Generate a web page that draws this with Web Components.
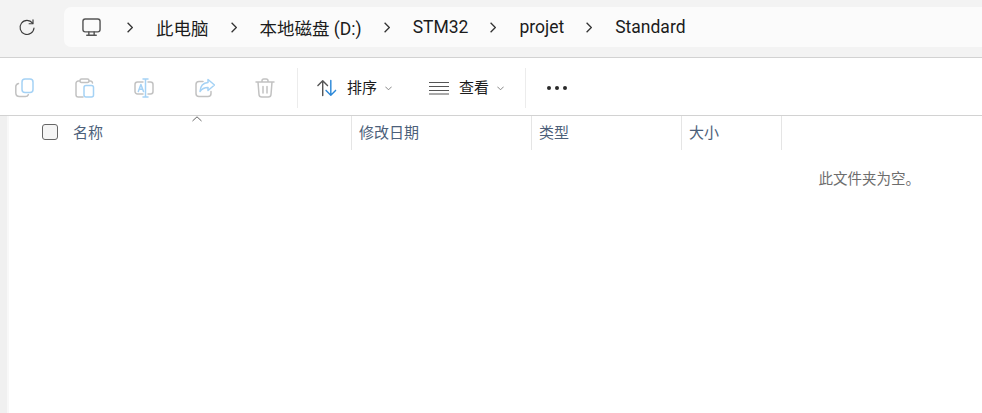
<!DOCTYPE html>
<html lang="zh">
<head>
<meta charset="utf-8">
<title>Standard</title>
<style>
    html, body { margin: 0; height: 100%; background: #fff; overflow: hidden; }
    body { font-family: "Noto Sans", "Noto Sans CJK SC", sans-serif; }
</style>
</head>
<body>
<file-window>
    <address-bar slot="top">
        <path-crumb>此电脑</path-crumb>
        <path-crumb>本地磁盘 (D:)</path-crumb>
        <path-crumb>STM32</path-crumb>
        <path-crumb>projet</path-crumb>
        <path-crumb>Standard</path-crumb>
    </address-bar>
    <command-bar slot="bar"></command-bar>
    <file-list slot="list">此文件夹为空。</file-list>
</file-window>

<script>
const CJK = '"Noto Sans CJK SC", sans-serif';
const LATIN = 'Roboto, "Noto Sans CJK SC", sans-serif';

class FileWindow extends HTMLElement {
    constructor() {
        super();
        this.attachShadow({ mode: 'open' });
        this.shadowRoot.innerHTML = `
            <style>
                :host { display: flex; flex-direction: column; width: 982px; height: 413px; overflow: hidden; }
                .top { height: 57px; flex: none; background: #f3f3f3; border-bottom: 1px solid #d2d2d2; }
                .bar { height: 57px; flex: none; background: #fff; border-bottom: 1px solid #d2d2d2; }
                .body { flex: 1; display: flex; min-height: 0; }
                .rail { width: 7px; flex: none; background: #f0f0f0; border-right: 2px solid #f8f8f8; }
                .list { flex: 1; min-width: 0; }
            </style>
            <div class="top"><slot name="top"></slot></div>
            <div class="bar"><slot name="bar"></slot></div>
            <div class="body">
                <div class="rail"></div>
                <div class="list"><slot name="list"></slot></div>
            </div>
        `;
    }
}

class AddressBar extends HTMLElement {
    constructor() {
        super();
        this.attachShadow({ mode: 'open' });
        this.shadowRoot.innerHTML = `
            <style>
                :host { display: flex; align-items: flex-start; height: 57px; padding: 7px 0 0 18px; box-sizing: border-box; }
                .refresh { width: 18px; height: 40px; flex: none; display: flex; align-items: center; margin-right: 28px; }
                .field {
                    flex: 1; height: 40px; display: flex; align-items: center; padding-left: 18px;
                    background: #fbfbfb; border-radius: 7px 0 0 7px; min-width: 0;
                }
                .pc { width: 19px; height: 19px; flex: none; margin-right: 4px; }
                svg { display: block; fill: none; }
            </style>
            <div class="refresh">
                <svg width="18" height="18" viewBox="0 0 18 18" stroke="#3a3a3a" stroke-width="1.15" stroke-linecap="round" stroke-linejoin="round">
                    <path d="M14.6 5.2A7 7 0 1 0 16 10" />
                    <path d="M15 1.8v3.9h-3.9" />
                </svg>
            </div>
            <div class="field">
                <svg class="pc" viewBox="0 0 20 20" stroke="#555" stroke-width="1.5" stroke-linecap="round" stroke-linejoin="round">
                    <rect x="1" y="1" width="18" height="13.6" rx="2.4" />
                    <path d="M7.2 14.8v3M12.8 14.8v3M5 18.2h10" />
                </svg>
                <slot></slot>
            </div>
        `;
    }
}

class PathCrumb extends HTMLElement {
    constructor() {
        super();
        this.attachShadow({ mode: 'open' });
        this.shadowRoot.innerHTML = `
            <style>
                :host { display: flex; align-items: center; font: 17.5px ${LATIN}; color: #1c1c1c; white-space: nowrap; }
                svg { width: 6px; height: 11px; margin: 0 23px 0 22px; flex: none; fill: none; stroke: #333; stroke-width: 1.3; }
            </style>
            <svg viewBox="0 0 6 11"><path d="M.6.8l4.7 4.7L.6 10.2" /></svg>
            <slot></slot>
        `;
    }
}

class CommandBar extends HTMLElement {
    constructor() {
        super();
        this.attachShadow({ mode: 'open' });
        const g = 'stroke="#c2c2c2"';
        const b = 'stroke="#a5d2f5"';
        this.shadowRoot.innerHTML = `
            <style>
                :host { display: flex; align-items: center; height: 57px; padding: 3px 0 0 15px; box-sizing: border-box; font: 15px ${CJK}; color: #1c1c1c; }
                svg { display: block; fill: none; flex: none; stroke-width: 1.5; stroke-linecap: round; stroke-linejoin: round; }
                .ico { width: 20px; height: 20px; margin-right: 40px; }
                .sep { width: 1px; height: 40px; background: #ececec; flex: none; }
                .cmd { display: flex; align-items: center; flex: none; }
                .label { margin-left: 10px; line-height: 20px; position: relative; top: -1px; }
                .chev { width: 7px; height: 5px; margin-left: 8px; stroke: #777; stroke-width: 1; }
                .more { display: flex; gap: 4px; margin-left: 21px; }
                .more i { width: 4px; height: 4px; border-radius: 50%; background: #2a2a2a; }
            </style>
            <svg class="ico" viewBox="0 0 20 20">
                <path ${g} d="M3.5 5.5C1.8 6 .8 7 .8 8.6v6.2c0 2.2 1.5 3.8 3.8 3.800h5.8c1.4 0 2.5-.8 3-2" />
                <rect ${b} x="7" y="1" width="11" height="13.6" rx="3" />
            </svg>
            <svg class="ico" viewBox="0 0 20 20">
                <path ${g} d="M5 3H3.3A2.3 2.3 0 0 0 1 5.3v11.4A2.3 2.3 0 0 0 3.3 19H8" />
                <path ${g} d="M14 3h1.2A2.3 2.3 0 0 1 17.5 5" />
                <rect ${g} x="5" y="1" width="9" height="3.6" rx="1.5" />
                <rect ${b} x="9" y="7.5" width="9.5" height="11.5" rx="2" />
            </svg>
            <svg class="ico" viewBox="0 0 20 20" style="margin:0 41px 0 -1px">
                <path ${g} d="M9 4H3.5A2.5 2.5 0 0 0 1 6.5v7A2.5 2.5 0 0 0 3.5 16H9" />
                <path ${g} d="M14 4h2.5A2.5 2.5 0 0 1 19 6.5v7a2.5 2.5 0 0 1-2.5 2.5H14" />
                <path ${b} d="M11.5 1v18M9 1h5M9 19h5M4.3 13.5l2.6-7 2.600 7M5.2 11.2h3.4" />
            </svg>
            <svg class="ico" viewBox="0 0 20 20">
                <path ${g} d="M8 3.5H4A3 3 0 0 0 1 6.500v9a3 3 0 0 0 3 3h9a3 3 0 0 0 3-3v-2" />
                <path ${b} d="M13 1.5 19.500 7 13 12.500V9.500C9.500 9.500 7 10.500 5 13.500 5.300 8.500 8 4.800 13 4.500Z" />
            </svg>
            <svg class="ico" viewBox="0 0 20 20" style="margin-right:22px">
                <path ${g} d="M1 4h18M7 4V2.800A1.800 1.800 0 0 1 8.800 1h2.400A1.800 1.800 0 0 1 13 2.800V4M3 4l1 12.500A2.700 2.700 0 0 0 6.700 19h6.600a2.700 2.700 0 0 0 2.700-2.500L17 4M8 8.500v6.500M12 8.500v6.500" />
            </svg>
            <div class="sep"></div>
            <div class="cmd" style="margin-left:19px">
                <svg width="20" height="18" viewBox="0 0 21 18">
                    <path stroke="#555" d="M6 17V1.500M1 6.500l5-5 5 5" />
                    <path stroke="#2b88d8" d="M14.500 1v15.500M9.500 11.500l5 5 5-5" />
                </svg>
                <span class="label">排序</span>
                <svg class="chev" viewBox="0 0 8 5"><path d="M.7.7 4 4 7.300.7" /></svg>
            </div>
            <div class="cmd" style="margin-left:37px">
                <svg width="20" height="14" viewBox="0 0 20 14">
                    <path stroke="#555" stroke-width="1.2" stroke-linecap="butt" d="M0 1.500h20M0 5.500h20M0 9.500h20M0 13h20" />
                </svg>
                <span class="label">查看</span>
                <svg class="chev" viewBox="0 0 8 5"><path d="M.7.7 4 4 7.300.7" /></svg>
            </div>
            <div class="sep" style="margin-left:21px"></div>
            <div class="more"><i></i><i></i><i></i></div>
        `;
    }
}

class ColumnHead extends HTMLElement {
    constructor() {
        super();
        this.attachShadow({ mode: 'open' });
        this.shadowRoot.innerHTML = `
            <style>
                :host { display: flex; align-items: center; box-sizing: border-box; height: 34px; padding: 0 0 3px 7px; border-right: 1px solid #e5e5e5; font: 15px ${CJK}; color: #4c607a; }
            </style>
            <slot></slot>
        `;
    }
}

class FileList extends HTMLElement {
    constructor() {
        super();
        this.attachShadow({ mode: 'open' });
        this.shadowRoot.innerHTML = `
            <style>
                :host { display: block; position: relative; font: 14.5px ${CJK}; }
                .head { display: grid; grid-template-columns: 343px 180px 150px 100px; height: 34px; }
                .name { padding-left: 33px; }
                .check { width: 14px; height: 14px; border: 1px solid #666; border-radius: 3px; background: #f5f5f5; margin-right: 15px; flex: none; }
                .sort { position: absolute; left: 183px; top: 0; width: 10px; height: 6px; fill: none; stroke: #666; }
                .empty { text-align: right; padding: 19px 62px 0 0; color: #6d6d6d; line-height: 18px; }
            </style>
            <div class="head">
                <column-head class="name"><span class="check"></span>名称</column-head>
                <column-head>修改日期</column-head>
                <column-head>类型</column-head>
                <column-head>大小</column-head>
            </div>
            <svg class="sort" viewBox="0 0 10 6"><path d="M.5 5 5 .8 9.500 5" /></svg>
            <div class="empty"><slot></slot></div>
        `;
    }
}

customElements.define('file-window', FileWindow);
customElements.define('address-bar', AddressBar);
customElements.define('path-crumb', PathCrumb);
customElements.define('command-bar', CommandBar);
customElements.define('column-head', ColumnHead);
customElements.define('file-list', FileList);
</script>
</body>
</html>
